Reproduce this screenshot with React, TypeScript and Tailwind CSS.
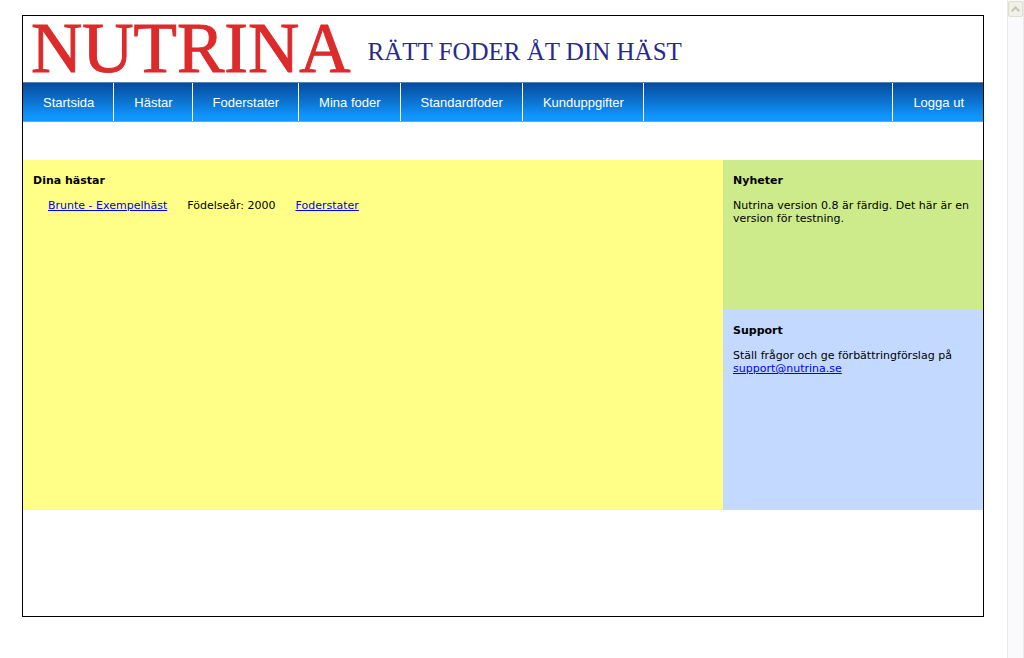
import type { ReactNode } from 'react';

const NAV_ITEMS = ['Startsida', 'Hästar', 'Foderstater', 'Mina foder', 'Standardfoder', 'Kunduppgifter'];

interface Horse {
  name: string;
  birthYear: number;
}

const HORSES: Horse[] = [{ name: 'Brunte - Exempelhäst', birthYear: 2000 }];

function Header() {
  return (
    <header className="flex h-[66px] items-center gap-[17px] pb-0.5 pl-2 font-['Liberation_Serif',serif] whitespace-nowrap">
      <h1 className="text-[71px] leading-[64px] text-[#dd2a2b] [-webkit-text-stroke:1px_#dd2a2b]">NUTRINA</h1>
      <p className="pt-2 text-[25px] leading-8 text-[#2a2a8c]">RÄTT FODER ÅT DIN HÄST</p>
    </header>
  );
}

function NavLink({ children }: { children: ReactNode }) {
  return (
    <a href="#" className="flex items-center pr-[19px] pl-5">
      {children}
    </a>
  );
}

function Nav() {
  return (
    <nav className="flex h-10 justify-between border-y border-t-[#5583b8] border-b-[#5aaaf0] bg-linear-to-b from-[#084b9c] to-[#1097ff] to-90% font-['Liberation_Sans',sans-serif] text-[13px] text-white">
      <ul className="flex divide-x divide-white border-r border-white">
        {NAV_ITEMS.map((item) => (
          <li key={item} className="flex">
            <NavLink>{item}</NavLink>
          </li>
        ))}
      </ul>
      <div className="flex border-l border-white">
        <NavLink>Logga ut</NavLink>
      </div>
    </nav>
  );
}

function PanelTitle({ children }: { children: ReactNode }) {
  return <h2 className="mb-3 font-bold">{children}</h2>;
}

function TextLink({ href, children }: { href: string; children: ReactNode }) {
  return (
    <a href={href} className="text-[#0000ee] underline">
      {children}
    </a>
  );
}

function ScrollTrack() {
  return (
    <div className="w-[17px] shrink-0 border-x border-[#e9e9ee] bg-[#fafafd]">
      <button
        type="button"
        aria-label="Rulla upp"
        className="mt-px flex h-4 w-full items-center justify-center rounded-xs border border-[#dfddcf] bg-[#f2f1e8]"
      >
        <svg width="9" height="6" viewBox="0 0 9 6" fill="none" stroke="#c4c3ba" strokeWidth="2">
          <path d="M.7 5.2 4.5 1.4l3.8 3.8" />
        </svg>
      </button>
    </div>
  );
}

export default function App() {
  return (
    <div className="flex min-h-screen bg-white font-['DejaVu_Sans',sans-serif] text-[11px] leading-[13px] text-black">
      <div className="min-w-0 flex-1 pt-[15px] pr-[23px] pb-10 pl-[22px]">
        <div className="min-h-[602px] border border-black">
          <Header />
          <Nav />

          <main className="mt-[38px] flex">
            <section className="min-h-[350px] flex-1 bg-[#ffff88] pt-[14px] pl-[10px]">
              <PanelTitle>Dina hästar</PanelTitle>
              <ul className="pl-[15px]">
                {HORSES.map((horse) => (
                  <li key={horse.name} className="flex gap-5">
                    <TextLink href="#">{horse.name}</TextLink>
                    <span>Födelseår: {horse.birthYear}</span>
                    <TextLink href="#">Foderstater</TextLink>
                  </li>
                ))}
              </ul>
            </section>

            <aside className="flex w-[260px] shrink-0 flex-col">
              <section className="min-h-[150px] bg-[#cdeb8b] pt-[14px] pl-[10px]">
                <PanelTitle>Nyheter</PanelTitle>
                <p>Nutrina version 0.8 är färdig. Det här är en version för testning.</p>
              </section>
              <section className="min-h-[200px] flex-1 bg-[#c3d9ff] pt-[14px] pl-[10px]">
                <PanelTitle>Support</PanelTitle>
                <p>
                  Ställ frågor och ge förbättringförslag på{' '}
                  <TextLink href="mailto:support@nutrina.se">support@nutrina.se</TextLink>
                </p>
              </section>
            </aside>
          </main>
        </div>
      </div>
      <ScrollTrack />
    </div>
  );
}
